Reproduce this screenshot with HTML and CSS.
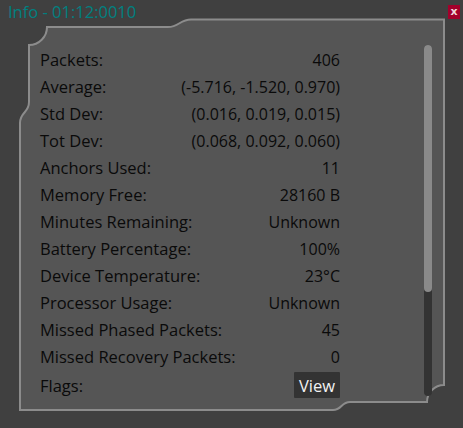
FILE: index.html
```html
<!DOCTYPE html>
<html>
<head>
<meta charset="utf-8">
<link rel="stylesheet" href="styles.css">
</head>
<body>
<div class="window">
  <svg class="frame" width="463" height="428" viewBox="0 0 463 428">
    <path d="M47,27 L168,27 C179,27 180,19.5 191,19.5 L444,19.5 L444,385 A17,17 0 0 0 427,402 L350,402 C341,402 342,410 333,410 L20,410 L20,123 C20,112 29,113 29,102 L29,45 A18,18 0 0 0 47,27 Z" fill="#555555" stroke="#8c8c8c" stroke-width="2"/>
  </svg>
  <header class="titlebar">
    <span class="title">Info - 01:12:0010</span>
    <span class="close">x</span>
  </header>
  <div class="content">
    <div class="list">
      <div class="row"><span>Packets:</span><span class="val">406</span></div>
      <div class="row"><span>Average:</span><span class="val">(-5.716, -1.520, 0.970)</span></div>
      <div class="row"><span>Std Dev:</span><span class="val">(0.016, 0.019, 0.015)</span></div>
      <div class="row"><span>Tot Dev:</span><span class="val">(0.068, 0.092, 0.060)</span></div>
      <div class="row"><span>Anchors Used:</span><span class="val">11</span></div>
      <div class="row"><span>Memory Free:</span><span class="val">28160 B</span></div>
      <div class="row"><span>Minutes Remaining:</span><span class="val">Unknown</span></div>
      <div class="row"><span>Battery Percentage:</span><span class="val">100%</span></div>
      <div class="row"><span>Device Temperature:</span><span class="val">23°C</span></div>
      <div class="row"><span>Processor Usage:</span><span class="val">Unknown</span></div>
      <div class="row"><span>Missed Phased Packets:</span><span class="val">45</span></div>
      <div class="row"><span>Missed Recovery Packets:</span><span class="val">0</span></div>
      <div class="row flags"><span>Flags:</span><span class="btn">View</span></div>
    </div>
    <div class="scrollbar"><div class="thumb"></div></div>
  </div>
</div>
</body>
</html>
```
FILE: styles.css
```css
html, body {
  margin: 0;
  padding: 0;
}
body {
  background: #404040;
  font-family: "Open Sans", "Noto Sans", sans-serif;
  font-size: 16.5px;
  color: #0a0a0a;
}
.window {
  position: relative;
  width: 463px;
  height: 428px;
  overflow: hidden;
}
.frame {
  position: absolute;
  left: 0;
  top: 0;
  z-index: 0;
}
.titlebar {
  position: relative;
  z-index: 1;
  display: flex;
  justify-content: space-between;
  align-items: flex-start;
  height: 22px;
  padding: 0 3px 0 8px;
  line-height: 23px;
}
.title {
  color: #008080;
}
.close {
  margin-top: 5px;
  width: 12px;
  height: 14px;
  background: #a3002b;
  color: #f0d8dc;
  font-size: 11px;
  line-height: 13px;
  text-align: center;
  font-family: "DejaVu Sans", sans-serif;
  font-weight: bold;
}
.content {
  position: relative;
  z-index: 1;
  display: flex;
  margin-top: 23px;
  padding-left: 40px;
}
.list {
  width: 300px;
  padding-top: 1px;
}
.row {
  display: flex;
  justify-content: space-between;
  align-items: baseline;
  line-height: 27px;
  height: 27px;
}
.val {
  font-size: 16px;
}
.row.flags {
  margin-top: 2px;
  height: 26px;
}
.btn {
  background: #333333;
  color: #f2f2f2;
  height: 26px;
  box-sizing: border-box;
  padding: 2px 5px 0;
  line-height: 24px;
  border-radius: 1px;
}
.scrollbar {
  margin-left: 84px;
  width: 8px;
  height: 351px;
  background: #333333;
  border-radius: 4px;
}
.thumb {
  height: 247px;
  background: #8a8a8a;
  border-radius: 4px;
}
```
